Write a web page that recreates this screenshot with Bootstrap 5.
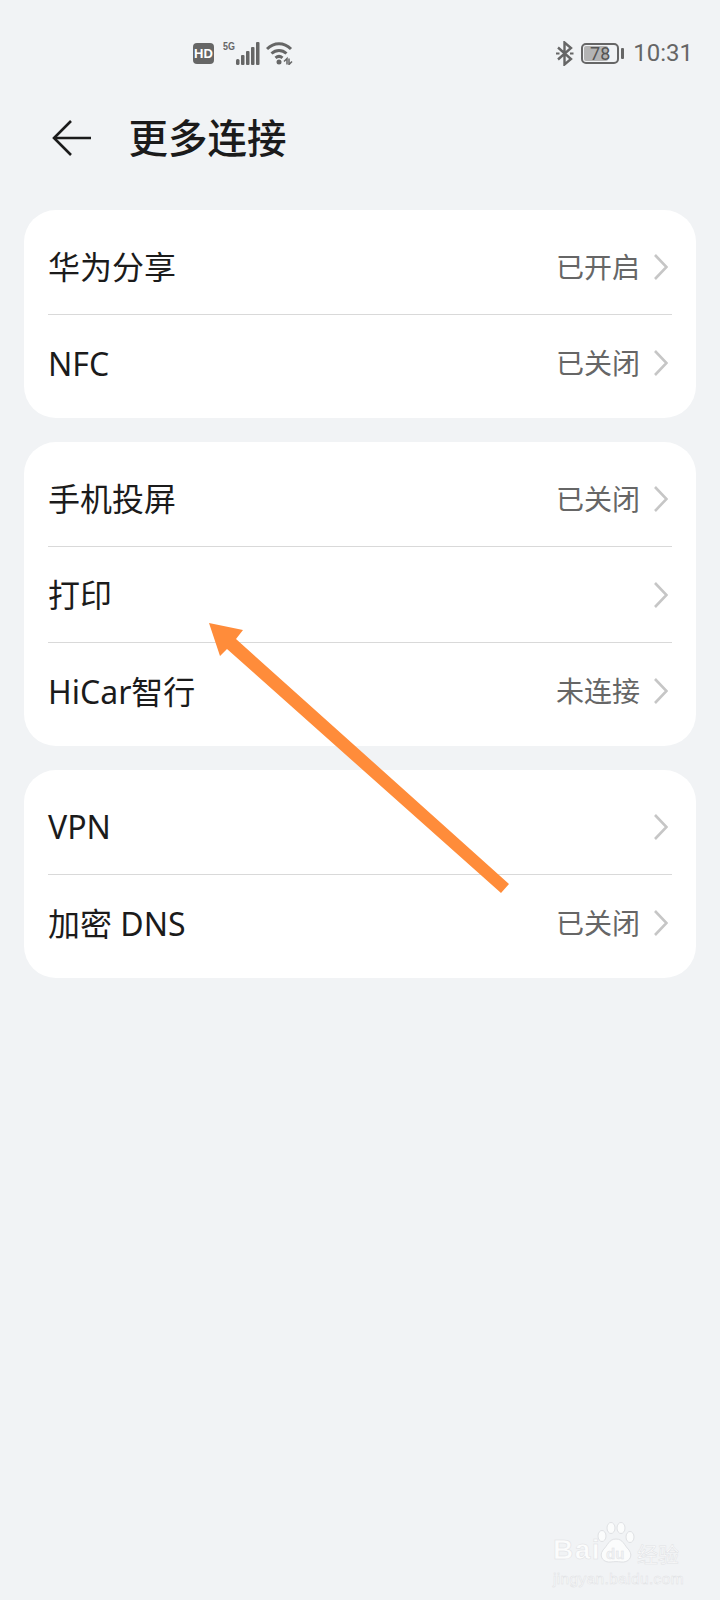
<!DOCTYPE html>
<html lang="zh">

<head>
  <meta charset="utf-8">
  <title>更多连接</title>
  <link href="https://cdn.jsdelivr.net/npm/bootstrap@5.3.2/dist/css/bootstrap.min.css" rel="stylesheet" type="text/css" />
  <script src="https://cdn.jsdelivr.net/npm/bootstrap@5.3.2/dist/js/bootstrap.bundle.min.js"></script>
  <style>
    body {
      width: 720px;
      height: 1600px;
      overflow: hidden;
      position: relative;
      background: #f1f3f5;
      font-family: "Noto Sans", "Noto Sans CJK SC", sans-serif;
      color: #1b1b1b;
    }
    .status-bar { height: 106px; padding: 0 27px 0 193px; color: #666; font-family: Roboto, sans-serif; }
    .hd-badge {
      width: 21px; height: 21px; border-radius: 4px; background: #666; color: #fff;
      font: 700 13px/21px "Liberation Sans", sans-serif; text-align: center;
    }
    .five-g { font: 700 10.5px/1 "Liberation Sans", sans-serif; margin: -13px 0 0 8px; transform: scaleX(.85); }
    .clock { font-size: 24px; line-height: 1; margin-left: 9px; }
    .batt { position: relative; width: 38px; height: 21px; margin-left: 7px; }
    .batt-fill { position: absolute; left: 3px; top: 3px; bottom: 3px; width: 24px; background: #b4b4b4; border-radius: 2px; }
    .batt-box { position: absolute; inset: 0; border: 2px solid #666; border-radius: 5px; }
    .batt-num { position: absolute; inset: 0; text-align: center; font-size: 18px; line-height: 21px; color: #555; }
    .batt-nub { width: 3px; height: 11px; background: #666; border-radius: 1px; margin-left: 2px; }
    .title-bar { height: 104px; padding: 0 0 40px 52px; }
    .title-bar h1 { font-size: 39.5px; font-weight: 500; margin: 2px 0 0 37.5px; color: #1b1b1b; }
    .group-card {
      margin: 0 24px 24px; border: 0; border-radius: 32px; padding: 9px 0 7px; background: #fff;
    }
    .group-card .list-group-item {
      height: 96px; margin: 0 24px; padding: 0; background: transparent;
      border-color: #d9d9d9; color: #1b1b1b; font-size: 32px;
    }
    .row-label { padding-top: 1px; }
    .row-value { color: #666; font-size: 28px; margin-left: auto; }
    .row-chevron { margin: 0 4px 0 14px; }
    .arrow-over { position: absolute; left: 0; top: 0; pointer-events: none; }
    .wm { position: absolute; left: 553px; top: 1522px; width: 140px; color: #fbfcfc; -webkit-text-stroke: .5px #dfe1e4; }
    .wm-top { height: 42px; }
    .wm-bai { font: 700 28px/1 "Liberation Sans", sans-serif; letter-spacing: 1.5px; width: 44px; }
    .wm-paw { position: relative; width: 38px; height: 42px; flex: none; }
    .wm-du { position: absolute; left: 9px; bottom: 3px; font: 700 15px/1 "Liberation Sans", sans-serif; color: #f1f3f5; -webkit-text-stroke: .4px #dfe1e4; }
    .wm-cn { font: 400 21px/1 "Noto Sans CJK SC", sans-serif; white-space: nowrap; margin-left: 2px; }
    .wm-url { font: 400 15.5px/1 "Liberation Sans", sans-serif; white-space: nowrap; letter-spacing: .35px; margin-top: 7px; }
  </style>
</head>

<body>
  <div class="status-bar d-flex align-items-center">
    <div class="hd-badge">HD</div>
    <span class="five-g">5G</span>
    <!-- signal -->
    <svg width="24" height="23" viewBox="0 0 24 23" fill="#666">
      <rect x="0" y="17" width="3.500" height="6" rx="1.500" />
      <rect x="5" y="13" width="3.500" height="10" rx="1" />
      <rect x="10" y="9" width="3.500" height="14" rx="1" />
      <rect x="15" y="5" width="3.500" height="18" rx="1" />
      <rect x="20" y="0" width="3.500" height="23" rx="1" />
    </svg>
    <!-- wifi -->
    <svg class="wifi-icon" style="margin-left:6px" width="28" height="24" viewBox="0 0 28 24" fill="none" stroke="#666" stroke-width="3">
      <path d="M1 8C8 1 18 1 25 8" />
      <path d="M5.500 12.500C10 8.500 16 8.500 20.500 12.500" />
      <path d="M9.500 16.800C12 14.800 14 14.800 16.500 16.800" />
      <circle cx="13" cy="21" r="2.500" fill="#666" stroke="none" />
      <path d="M18 20.500l3-3v6M23 17.500v6l3-3" stroke-width="1.500" />
    </svg>
    <div class="ms-auto d-flex align-items-center">
      <!-- bluetooth -->
      <svg width="18" height="25" viewBox="0 0 18 25" fill="none" stroke="#666" stroke-width="2.400">
        <path d="M2 6.500L15 18 8.500 23.500V1.500L15 7 2 18.500" />
        <path d="M0 12.500h3.500M14 12.500h3.500" stroke-width="1.800" />
      </svg>
      <div class="batt">
        <div class="batt-fill"></div>
        <div class="batt-box"></div>
        <div class="batt-num">78</div>
      </div>
      <div class="batt-nub"></div>
      <div class="clock">10:31</div>
    </div>
  </div>

  <div class="title-bar d-flex align-items-center">
    <svg width="39" height="36" viewBox="0 0 39 36" fill="none" stroke="#1b1b1b" stroke-width="2.600">
      <path d="M19 1L2 18 19 35" />
      <path d="M2 18H39" />
    </svg>
    <h1>更多连接</h1>
  </div>

  <div class="card group-card">
    <div class="list-group list-group-flush" id="group1"></div>
  </div>
  <div class="card group-card">
    <div class="list-group list-group-flush" id="group2"></div>
  </div>
  <div class="card group-card">
    <div class="list-group list-group-flush" id="group3"></div>
  </div>

  <!-- orange annotation arrow -->
  <svg class="arrow-over" width="720" height="1600" fill="#ff8c3a">
    <polygon points="209,623 243,630 236,639 509,884 501,893 227,649 220,656" />
  </svg>

  <div class="wm">
    <div class="wm-top d-flex align-items-end">
      <span class="wm-bai">Bai</span>
      <div class="wm-paw">
        <svg width="38" height="42" viewBox="0 0 38 42" fill="#fbfcfc" stroke="#dfe1e4">
          <ellipse cx="5" cy="14" rx="4" ry="5.500" />
          <ellipse cx="14" cy="6" rx="4" ry="5.500" />
          <ellipse cx="24" cy="6" rx="4" ry="5.500" />
          <ellipse cx="33" cy="15" rx="4" ry="5.500" />
          <path d="M19 17C26 17 27 23 32 28 37 35 31 41 24 40 21 39.500 17 39.500 14 40 7 41 1 35 6 28 11 23 12 17 19 17Z" />
        </svg>
        <span class="wm-du">du</span>
      </div>
      <span class="wm-cn">经验</span>
    </div>
    <div class="wm-url">jingyan.baidu.com</div>
  </div>

  <script>
    const groups = {
      group1: [["华为分享", "已开启"], ["NFC", "已关闭"]],
      group2: [["手机投屏", "已关闭"], ["打印", ""], ["HiCar智行", "未连接"]],
      group3: [["VPN", ""], ["加密 DNS", "已关闭"]]
    }

    const chevron = '<svg class="row-chevron" width="14" height="26" viewBox="0 0 14 26" fill="none" stroke="#c6c6c6" stroke-width="2.600"><path d="M1 1L12.500 13 1 25"/></svg>'

    for (const id in groups) {
      const list = document.querySelector("#" + id)
      for (let i = 0; i < groups[id].length; i++) {
        const item = document.createElement("div")
        item.className = "list-group-item d-flex align-items-center"
        item.innerHTML = `<span class="row-label">${groups[id][i][0]}</span><span class="row-value">${groups[id][i][1]}</span>${chevron}`
        list.appendChild(item)
      }
    }
  </script>
</body>

</html>
